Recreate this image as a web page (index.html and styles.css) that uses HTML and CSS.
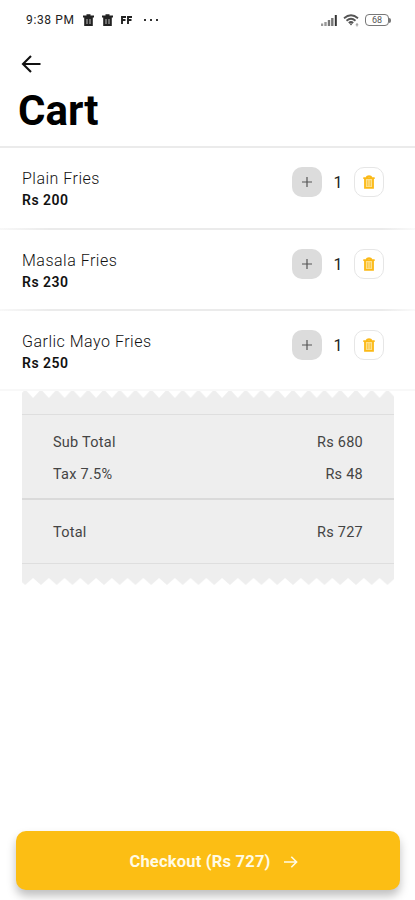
FILE: index.html
```html
<!DOCTYPE html>
<html lang="en">
<head>
<meta charset="utf-8">
<title>Cart</title>
<link rel="stylesheet" href="styles.css">
</head>
<body>
<svg class="defs" width="0" height="0" aria-hidden="true">
  <symbol id="bin" viewBox="0 0 12 14"><path d="M2 4h8v9H2z" fill="#fde08c"/><path d="M.3 3.2h11.4M3.6 2.4Q4 1.2 6 1.2t2.4 1.2M2 3.5v9.4h8V3.5" fill="none" stroke="currentColor" stroke-width="1.8"/><path d="M4.8 5.2v6M7.2 5.2v6" stroke="currentColor" stroke-width=".8"/></symbol>
  <symbol id="bin-solid" viewBox="0 0 11 12"><path d="M0 1.5h3.5V.3h4v1.2H11v2H9.8V12H1.2V3.5H0z" fill="currentColor"/><path d="M4 5v5M7 5v5" stroke="#fff" stroke-width=".7"/></symbol>
  <symbol id="plus" viewBox="0 0 12 12"><path d="M6 1v10M1 6h10" stroke="currentColor" stroke-width="1.2"/></symbol>
</svg>
<div class="screen">
  <div class="status">
    <span class="time">9:38 PM</span>
    <svg class="s-bin"><use href="#bin-solid"/></svg>
    <svg class="s-bin"><use href="#bin-solid"/></svg>
    <svg class="s-flags" viewBox="0 0 12 8"><path d="M1 8V1h4M1 4h3.5M7 8V1h4M7 4h3.5" fill="none" stroke="#222" stroke-width="1.9"/></svg>
    <svg class="s-dots" viewBox="0 0 14 2"><path d="M0 0h2v2H0zM6 0h2v2H6zM12 0h2v2h-2z" fill="#333"/></svg>
    <span class="grow"></span>
    <svg class="s-signal" viewBox="0 0 16 11"><path d="M1 8.5V11M4.5 7v4" stroke="#999" stroke-width="2.4"/><path d="M8 5v6M11.3 3v8" stroke="#777" stroke-width="2.4"/><path d="M14.8 0v11" stroke="#333" stroke-width="2"/></svg>
    <svg class="s-wifi" viewBox="0 0 17 13"><path d="M1 4.2Q8 -1.8 15 4.2M3.5 6.7Q8 2.8 12.5 6.7M5.8 9Q8 7 10.2 9" fill="none" stroke="#555" stroke-width="1.8"/><path d="M6.5 9.5h3L8 11.5z" fill="#444"/><path d="M14 9v3.5M12.7 10.8h2.6" stroke="#999"/></svg>
    <span class="battery">68</span><i class="cap"></i>
  </div>
  <header>
    <svg class="back" viewBox="0 0 20 18"><path d="M19.5 9H2M10 1 2 9l8 8" fill="none" stroke="#111" stroke-width="2.1"/></svg>
    <h1>Cart</h1>
  </header>
  <main>
    <div class="item"><div class="info"><div class="name">Plain Fries</div><div class="price">Rs 200</div></div><button class="add"><svg><use href="#plus"/></svg></button><span class="qty">1</span><button class="del"><svg><use href="#bin"/></svg></button></div>
    <div class="item"><div class="info"><div class="name">Masala Fries</div><div class="price">Rs 230</div></div><button class="add"><svg><use href="#plus"/></svg></button><span class="qty">1</span><button class="del"><svg><use href="#bin"/></svg></button></div>
    <div class="item last"><div class="info"><div class="name">Garlic Mayo Fries</div><div class="price">Rs 250</div></div><button class="add"><svg><use href="#plus"/></svg></button><span class="qty">1</span><button class="del"><svg><use href="#bin"/></svg></button></div>
    <section class="receipt">
      <svg class="teeth"><defs><pattern id="down" x="3.2" width="15.75" height="7" patternUnits="userSpaceOnUse"><path d="M1.5 0h12.75L7.9 7z" fill="#fff"/></pattern></defs><rect width="372" height="7" fill="url(#down)"/></svg>
      <div class="sums">
        <div class="line"><span>Sub Total</span><span>Rs 680</span></div>
        <div class="line"><span>Tax 7.5%</span><span>Rs 48</span></div>
      </div>
      <div class="total line"><span>Total</span><span>Rs 727</span></div>
      <svg class="teeth"><defs><pattern id="up" x="3.2" width="15.75" height="7" patternUnits="userSpaceOnUse"><path d="M0 7 7.9 0l7.85 7z" fill="#fff"/></pattern></defs><rect width="372" height="7" fill="url(#up)"/></svg>
    </section>
  </main>
  <button class="checkout"><span>Checkout (Rs 727)</span><svg viewBox="0 0 14 12"><path d="M0 6h12.5M7.3.7 12.6 6l-5.3 5.3" fill="none" stroke="#fffbe5" stroke-width="1.6"/></svg></button>
</div>
</body>
</html>
```
FILE: styles.css
```css
* { box-sizing: border-box; }
body { margin: 0; background: #fff; color: #111; font-family: Roboto, sans-serif; }
button { border: 0; padding: 0; font: inherit; }
svg { display: block; flex: none; }
.defs { position: absolute; }
.screen { width: 415px; height: 900px; display: flex; flex-direction: column; overflow: hidden; }
.status { height: 40px; padding: 0 24px 0 26px; display: flex; align-items: center; }
.time { width: 50px; font-size: 12px; letter-spacing: .65px; margin-right: 7px; color: #222; white-space: nowrap; }
.s-bin { width: 11px; height: 12px; margin-right: 8px; color: #222; }
.s-flags { width: 12px; height: 8px; }
.s-dots { width: 14px; height: 2px; margin-left: 11px; }
.grow { flex: 1; }
.s-signal { width: 16px; height: 11px; margin-right: 6px; }
.s-wifi { width: 17px; height: 13px; margin-right: 5px; }
.battery { width: 24px; height: 12px; border: 1.5px solid #777; border-radius: 4px; font-size: 9px; line-height: 10px; text-align: center; color: #555; }
.cap { width: 2px; height: 5px; background: #777; border-radius: 0 2px 2px 0; }
header { height: 108px; border-bottom: 2px solid #ebebeb; padding: 15px 18px 0; }
.back { width: 20px; height: 18px; margin-left: 3px; }
h1 { margin: 14px 0 0; font-size: 42px; line-height: 48px; font-weight: 700; color: #000; }
main { flex: 1; }
.item { height: 81.5px; padding: 19px 31px 0 22px; display: flex; align-items: flex-start; background: linear-gradient(90deg, #f8f8f8, #ebebeb 12%, #ebebeb 92%, #fafafa) bottom / 100% 2px no-repeat; }
.last { height: 80px; background: linear-gradient(#f8f8f8, #f8f8f8) bottom / 100% 2px no-repeat; }
.info { flex: 1; padding-top: 1px; }
.name { font-size: 16px; line-height: 22px; font-weight: 300; letter-spacing: .5px; color: #111; }
.price { font-size: 14px; line-height: 20px; font-weight: 600; letter-spacing: .5px; color: #111; }
.add, .del { width: 30px; height: 30px; border-radius: 10px; display: flex; align-items: center; justify-content: center; }
.add { background: #dcdcdc; color: #555; }
.add svg { width: 12px; height: 12px; }
.qty { width: 32px; line-height: 32px; text-align: center; font-size: 16px; color: #222; }
.del { background: #fff; border: 1px solid #e6e6e6; color: #fbb916; }
.del svg { width: 12px; height: 14px; }
.receipt { width: 372px; margin-left: 22px; background: #eee; height: 194px; }
.teeth { width: 372px; height: 7px; }
.sums { margin-top: 16px; border-top: 1px solid #dedede; border-bottom: 2px solid #dadada; height: 86px; padding-top: 12px; }
.line { display: flex; justify-content: space-between; padding: 0 31px; font-size: 14.5px; line-height: 31.5px; letter-spacing: .25px; color: #444; }
.total { height: 64px; border-bottom: 1px solid #dedede; line-height: 66px; margin-bottom: 14px; }
.checkout { width: 384px; height: 59px; margin: 0 0 10px 16px; border-radius: 10px; background: #fcbe14; color: #fffbe5; box-shadow: 0 6px 10px rgba(0,0,0,.25); display: flex; align-items: center; justify-content: center; gap: 13px; padding: 2px 0 0 11px; font-size: 16.5px; font-weight: 700; letter-spacing: .2px; }
.checkout svg { width: 14px; height: 12px; }
```
